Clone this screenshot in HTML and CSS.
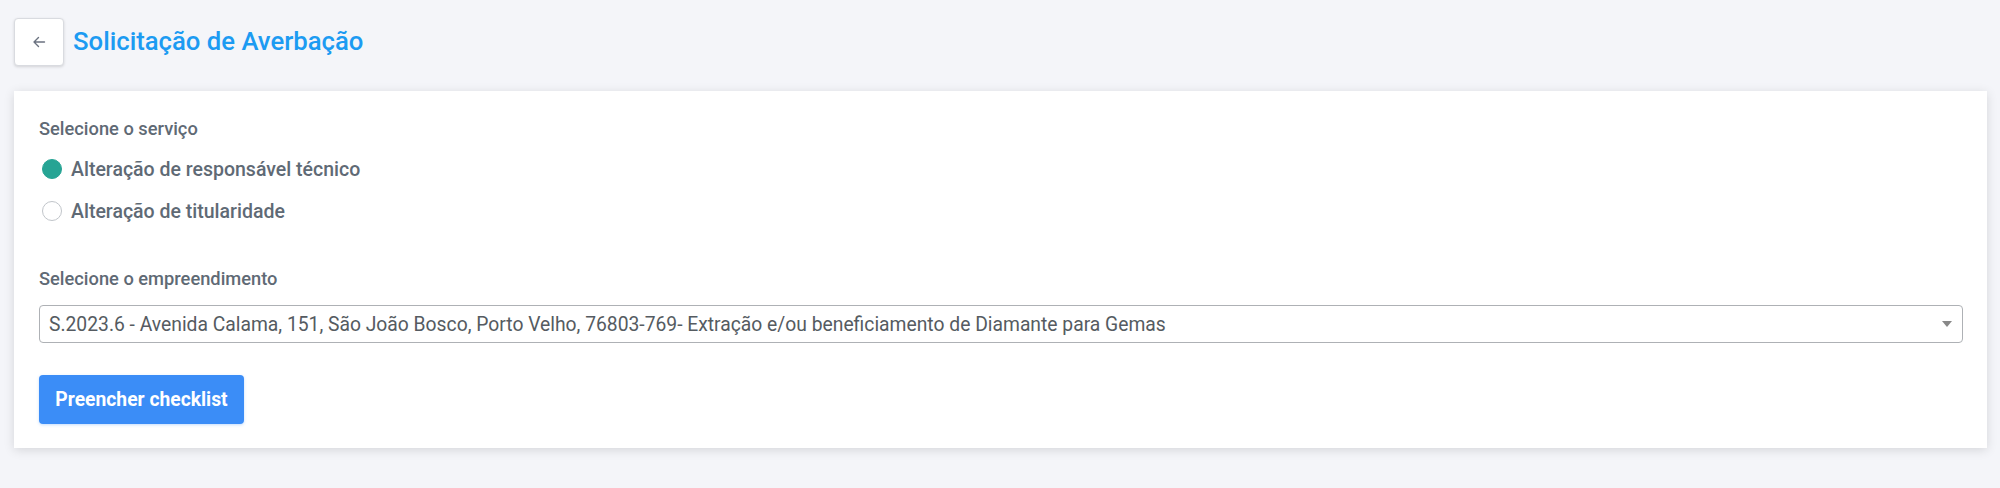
FILE: index.html
```html
<!DOCTYPE html>
<html lang="pt-BR">
<head>
<meta charset="utf-8">
<title>Solicitação de Averbação</title>
<link rel="stylesheet" href="styles.css">
</head>
<body>
<div class="page">
  <header class="header">
    <button class="back-btn" type="button" aria-label="Voltar">
      <svg width="14" height="14" viewBox="0 0 14 14" aria-hidden="true">
        <path d="M12.5 7H2M6.5 2.5L2 7l4.5 4.5" fill="none" stroke="#6b7280" stroke-width="1.4" stroke-linecap="round" stroke-linejoin="round"/>
      </svg>
    </button>
    <h1 class="title">Solicitação de Averbação</h1>
  </header>

  <section class="card">
    <div class="field-label">Selecione o serviço</div>
    <div class="radio-group">
      <label class="radio-row">
        <span class="radio checked"></span>
        <span class="radio-text">Alteração de responsável técnico</span>
      </label>
      <label class="radio-row">
        <span class="radio"></span>
        <span class="radio-text">Alteração de titularidade</span>
      </label>
    </div>

    <div class="field-label second">Selecione o empreendimento</div>
    <div class="select">
      <span class="select-text">S.2023.6 - Avenida Calama, 151, São João Bosco, Porto Velho, 76803-769- Extração e/ou beneficiamento de Diamante para Gemas</span>
      <span class="caret"></span>
    </div>

    <button class="primary-btn" type="button">Preencher checklist</button>
  </section>
</div>
</body>
</html>
```

FILE: styles.css
```css
* { box-sizing: border-box; }

html, body {
  margin: 0;
  padding: 0;
}

body {
  background: #f4f5f9;
  font-family: Roboto, "Liberation Sans", Arial, sans-serif;
  color: #5f6a75;
  height: 488px;
  overflow: hidden;
}

.page {
  padding: 18px 13px 0 14px;
}

.header {
  display: flex;
  align-items: center;
  gap: 9px;
  height: 48px;
}

.back-btn {
  width: 50px;
  height: 48px;
  padding: 0;
  margin: 0;
  border: 1px solid #d9dbe0;
  border-radius: 4px;
  background: #ffffff;
  box-shadow: 0 1px 3px rgba(0, 0, 0, 0.14);
  display: flex;
  align-items: center;
  justify-content: center;
}

.title {
  margin: 0;
  font-size: 25.7px;
  font-weight: 500;
  color: #1c9bf2;
  line-height: 1;
}

.card {
  margin-top: 25px;
  background: #ffffff;
  height: 357px;
  padding: 24px 24px 24px 25px;
  box-shadow: 0 2px 10px rgba(0, 0, 0, 0.13);
}

.field-label {
  font-size: 18.3px;
  font-weight: 500;
  line-height: 27px;
  color: #5f6a75;
}

.field-label.second {
  margin-top: 33px;
}

.radio-group {
  margin-top: 6px;
  display: flex;
  flex-direction: column;
}

.radio-row {
  display: flex;
  align-items: center;
  height: 42px;
  padding-left: 3px;
  gap: 9px;
}

.radio {
  width: 20px;
  height: 20px;
  border-radius: 50%;
  border: 1.5px solid #c1c5ca;
  background: #fff;
  flex: none;
}

.radio.checked {
  background: #26a494;
  border-color: #26a494;
}

.radio-text {
  font-size: 19.5px;
  font-weight: 500;
  color: #5f6a75;
}

.select {
  margin-top: 13px;
  height: 38px;
  border: 1px solid #aeb1b5;
  border-radius: 4px;
  display: flex;
  align-items: center;
  padding: 0 10px 0 9px;
}

.select-text {
  flex: 1;
  font-size: 19.3px;
  color: #555b61;
  white-space: nowrap;
  overflow: hidden;
}

.caret {
  width: 0;
  height: 0;
  border-left: 5px solid transparent;
  border-right: 5px solid transparent;
  border-top: 6px solid #888;
}

.primary-btn {
  display: block;
  margin-top: 32px;
  width: 205px;
  height: 49px;
  border: none;
  border-radius: 4px;
  background: #3b8df7;
  color: #ffffff;
  font-family: Roboto, "Liberation Sans", Arial, sans-serif;
  font-size: 19.3px;
  font-weight: 700;
  box-shadow: 0 1px 3px rgba(59, 141, 247, 0.3);
  padding: 0;
}
```
